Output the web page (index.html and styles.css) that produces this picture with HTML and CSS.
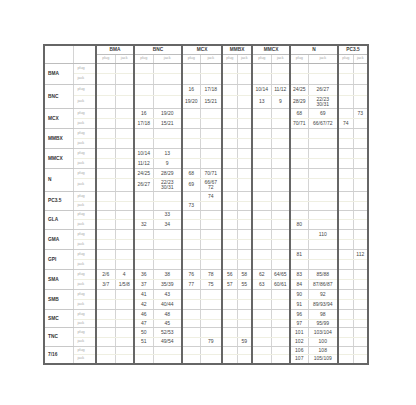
FILE: index.html
```html
<!DOCTYPE html>
<html>
<head>
<meta charset="utf-8">
<link rel="stylesheet" href="styles.css">
</head>
<body>
<table class="chart">
  <colgroup class="g-name"><col class="w29"></colgroup>
  <colgroup class="g-kind"><col class="w23"></colgroup>
  <colgroup class="grp"><col class="w19"><col class="w19"></colgroup>
  <colgroup class="grp"><col class="w19"><col class="w29"></colgroup>
  <colgroup class="grp"><col class="w18"><col class="w22"></colgroup>
  <colgroup class="grp"><col class="w15"><col class="w15"></colgroup>
  <colgroup class="grp"><col class="w19"><col class="w19"></colgroup>
  <colgroup class="grp"><col class="w18"><col class="w30"></colgroup>
  <colgroup class="grp"><col class="w15"><col class="w15"></colgroup>
  <thead>
    <tr class="hd1">
      <th rowspan="2" class="corner"></th>
      <th rowspan="2" class="corner"></th>
      <th colspan="2">BMA</th>
      <th colspan="2">BNC</th>
      <th colspan="2">MCX</th>
      <th colspan="2">MMBX</th>
      <th colspan="2">MMCX</th>
      <th colspan="2">N</th>
      <th colspan="2">PC3.5</th>
    </tr>
    <tr class="hd2">
      <th class="k">plug</th><th class="k">jack</th>
      <th class="k">plug</th><th class="k">jack</th>
      <th class="k">plug</th><th class="k">jack</th>
      <th class="k">plug</th><th class="k">jack</th>
      <th class="k">plug</th><th class="k">jack</th>
      <th class="k">plug</th><th class="k">jack</th>
      <th class="k">plug</th><th class="k">jack</th>
    </tr>
  </thead>
  <tbody>
    <tr class="p h10"><th rowspan="2" class="name">BMA</th><td class="kind">plug</td><td></td><td></td><td></td><td></td><td></td><td></td><td></td><td></td><td></td><td></td><td></td><td></td><td></td><td></td></tr>
    <tr class="j h11"><td class="kind">jack</td><td></td><td></td><td></td><td></td><td></td><td></td><td></td><td></td><td></td><td></td><td></td><td></td><td></td><td></td></tr>

    <tr class="p h11"><th rowspan="2" class="name">BNC</th><td class="kind">plug</td><td></td><td></td><td></td><td></td><td>16</td><td>17/18</td><td></td><td></td><td>10/14</td><td>11/12</td><td>24/25</td><td>26/27</td><td></td><td></td></tr>
    <tr class="j h13"><td class="kind">jack</td><td></td><td></td><td></td><td></td><td>19/20</td><td>15/21</td><td></td><td></td><td>13</td><td>9</td><td>28/29</td><td>22/23<br>30/31</td><td></td><td></td></tr>

    <tr class="p h10"><th rowspan="2" class="name">MCX</th><td class="kind">plug</td><td></td><td></td><td>16</td><td>19/20</td><td></td><td></td><td></td><td></td><td></td><td></td><td>68</td><td>69</td><td></td><td>73</td></tr>
    <tr class="j h10"><td class="kind">jack</td><td></td><td></td><td>17/18</td><td>15/21</td><td></td><td></td><td></td><td></td><td></td><td></td><td>70/71</td><td>66/67/72</td><td>74</td><td></td></tr>

    <tr class="p h10"><th rowspan="2" class="name">MMBX</th><td class="kind">plug</td><td></td><td></td><td></td><td></td><td></td><td></td><td></td><td></td><td></td><td></td><td></td><td></td><td></td><td></td></tr>
    <tr class="j h10"><td class="kind">jack</td><td></td><td></td><td></td><td></td><td></td><td></td><td></td><td></td><td></td><td></td><td></td><td></td><td></td><td></td></tr>

    <tr class="p h10"><th rowspan="2" class="name">MMCX</th><td class="kind">plug</td><td></td><td></td><td>10/14</td><td>13</td><td></td><td></td><td></td><td></td><td></td><td></td><td></td><td></td><td></td><td></td></tr>
    <tr class="j h10"><td class="kind">jack</td><td></td><td></td><td>11/12</td><td>9</td><td></td><td></td><td></td><td></td><td></td><td></td><td></td><td></td><td></td><td></td></tr>

    <tr class="p h10"><th rowspan="2" class="name">N</th><td class="kind">plug</td><td></td><td></td><td>24/25</td><td>28/29</td><td>68</td><td>70/71</td><td></td><td></td><td></td><td></td><td></td><td></td><td></td><td></td></tr>
    <tr class="j h13"><td class="kind">jack</td><td></td><td></td><td>26/27</td><td>22/23<br>30/31</td><td>69</td><td>66/67<br>72</td><td></td><td></td><td></td><td></td><td></td><td></td><td></td><td></td></tr>

    <tr class="p h10"><th rowspan="2" class="name">PC3.5</th><td class="kind">plug</td><td></td><td></td><td></td><td></td><td></td><td>74</td><td></td><td></td><td></td><td></td><td></td><td></td><td></td><td></td></tr>
    <tr class="j h9"><td class="kind">jack</td><td></td><td></td><td></td><td></td><td>73</td><td></td><td></td><td></td><td></td><td></td><td></td><td></td><td></td><td></td></tr>

    <tr class="p h9"><th rowspan="2" class="name">GLA</th><td class="kind">plug</td><td></td><td></td><td></td><td>33</td><td></td><td></td><td></td><td></td><td></td><td></td><td></td><td></td><td></td><td></td></tr>
    <tr class="j h10"><td class="kind">jack</td><td></td><td></td><td>32</td><td>34</td><td></td><td></td><td></td><td></td><td></td><td></td><td>80</td><td></td><td></td><td></td></tr>

    <tr class="p h10"><th rowspan="2" class="name">GMA</th><td class="kind">plug</td><td></td><td></td><td></td><td></td><td></td><td></td><td></td><td></td><td></td><td></td><td></td><td>110</td><td></td><td></td></tr>
    <tr class="j h10"><td class="kind">jack</td><td></td><td></td><td></td><td></td><td></td><td></td><td></td><td></td><td></td><td></td><td></td><td></td><td></td><td></td></tr>

    <tr class="p h10"><th rowspan="2" class="name">GPI</th><td class="kind">plug</td><td></td><td></td><td></td><td></td><td></td><td></td><td></td><td></td><td></td><td></td><td>81</td><td></td><td></td><td>112</td></tr>
    <tr class="j h10"><td class="kind">jack</td><td></td><td></td><td></td><td></td><td></td><td></td><td></td><td></td><td></td><td></td><td></td><td></td><td></td><td></td></tr>

    <tr class="p h10"><th rowspan="2" class="name">SMA</th><td class="kind">plug</td><td>2/6</td><td>4</td><td>36</td><td>38</td><td>76</td><td>78</td><td>56</td><td>58</td><td>62</td><td>64/65</td><td>83</td><td>85/88</td><td></td><td></td></tr>
    <tr class="j h10"><td class="kind">jack</td><td>3/7</td><td>1/5/8</td><td>37</td><td>35/39</td><td>77</td><td>75</td><td>57</td><td>55</td><td>63</td><td>60/61</td><td>84</td><td>87/86/87</td><td></td><td></td></tr>

    <tr class="p h10"><th rowspan="2" class="name">SMB</th><td class="kind">plug</td><td></td><td></td><td>41</td><td>43</td><td></td><td></td><td></td><td></td><td></td><td></td><td>90</td><td>92</td><td></td><td></td></tr>
    <tr class="j h10"><td class="kind">jack</td><td></td><td></td><td>42</td><td>40/44</td><td></td><td></td><td></td><td></td><td></td><td></td><td>91</td><td>89/93/94</td><td></td><td></td></tr>

    <tr class="p h10"><th rowspan="2" class="name">SMC</th><td class="kind">plug</td><td></td><td></td><td>46</td><td>48</td><td></td><td></td><td></td><td></td><td></td><td></td><td>96</td><td>98</td><td></td><td></td></tr>
    <tr class="j h8"><td class="kind">jack</td><td></td><td></td><td>47</td><td>45</td><td></td><td></td><td></td><td></td><td></td><td></td><td>97</td><td>95/99</td><td></td><td></td></tr>

    <tr class="p h10"><th rowspan="2" class="name">TNC</th><td class="kind">plug</td><td></td><td></td><td>50</td><td>52/53</td><td></td><td></td><td></td><td></td><td></td><td></td><td>101</td><td>103/104</td><td></td><td></td></tr>
    <tr class="j h9"><td class="kind">jack</td><td></td><td></td><td>51</td><td>49/54</td><td></td><td>79</td><td></td><td>59</td><td></td><td></td><td>102</td><td>100</td><td></td><td></td></tr>

    <tr class="p h8"><th rowspan="2" class="name">7/16</th><td class="kind">plug</td><td></td><td></td><td></td><td></td><td></td><td></td><td></td><td></td><td></td><td></td><td>106</td><td>108</td><td></td><td></td></tr>
    <tr class="j h9"><td class="kind">jack</td><td></td><td></td><td></td><td></td><td></td><td></td><td></td><td></td><td></td><td></td><td>107</td><td>105/109</td><td></td><td></td></tr>
  </tbody>
</table>
</body>
</html>
```

FILE: styles.css
```css
html, body {
  margin: 0;
  padding: 0;
  background: #ffffff;
}

body {
  font-family: "Liberation Sans", Arial, sans-serif;
}

.chart {
  margin: 44px 0 0 43px;
  border-collapse: collapse;
  table-layout: fixed;
  width: 324px;
  border: 2px solid #666666;
  color: #454545;
}

.w15 { width: 15px; }
.w18 { width: 18px; }
.w19 { width: 19px; }
.w22 { width: 22px; }
.w23 { width: 23px; }
.w29 { width: 29px; }
.w30 { width: 30px; }

.grp {
  border-left: 2px solid #666666;
}

.g-kind {
  border-left: 1px solid #9a9a9a;
}

.chart th,
.chart td {
  padding: 0;
  font-size: 5px;
  line-height: 5.5px;
  text-align: center;
  vertical-align: middle;
  font-weight: normal;
  white-space: nowrap;
  overflow: hidden;
  border: 1px solid #d4d4d4;
}

.hd1 th {
  height: 8px;
  font-weight: bold;
  color: #3a3a3a;
  font-size: 4.8px;
  border-bottom-color: #bdbdbd;
}

.hd2 th {
  height: 8px;
  border-bottom: 1px solid #b5b5b5;
}

.chart .k,
.chart .kind {
  font-size: 3.8px;
  color: #a8a8a8;
}

.chart .kind {
  text-align: left;
  padding-left: 4px;
}

.chart .name {
  text-align: left;
  padding-left: 3px;
  font-weight: bold;
  font-size: 4.8px;
  color: #333333;
  border-bottom: 1px solid #c8c8c8;
}

.p td {
  border-bottom: 1px solid #efefe2;
}

.j td {
  border-top: 1px solid #efefe2;
  border-bottom: 1px solid #cfcfcf;
}

.h8 { height: 8px; }
.h9 { height: 9px; }
.h10 { height: 10px; }
.h11 { height: 11px; }
.h13 { height: 13px; }
```
